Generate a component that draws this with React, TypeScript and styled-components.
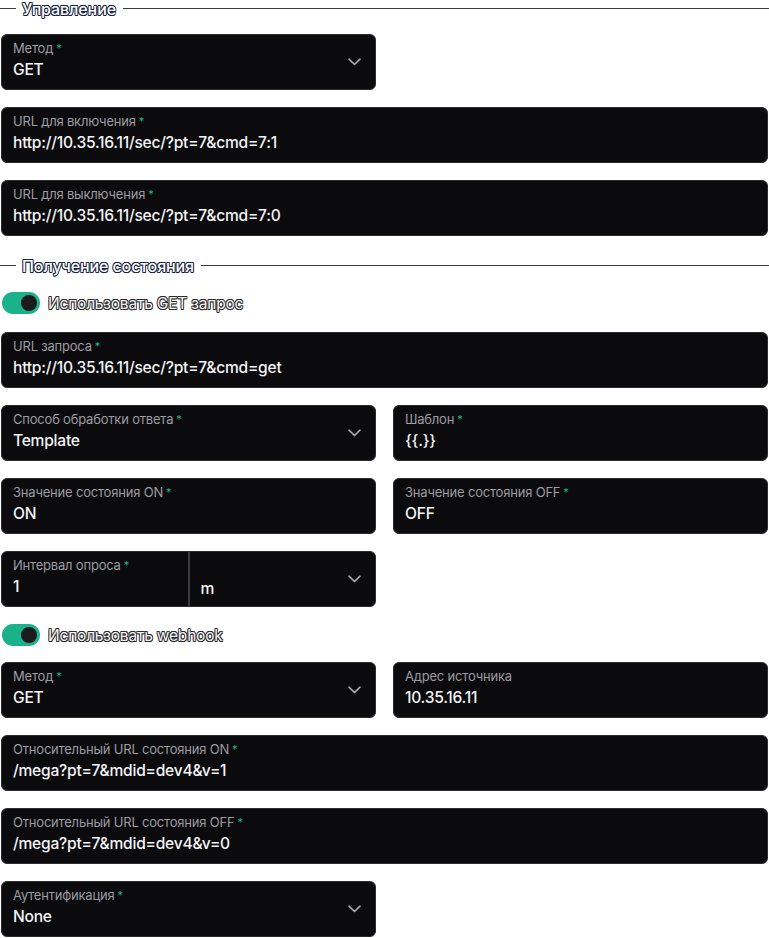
import React from "react";
import styled, { createGlobalStyle } from "styled-components";

const Global = createGlobalStyle`
  html, body { margin: 0; padding: 0; background: #ffffff; }
  body { font-family: Inter, "Noto Sans", sans-serif; }
  * { box-sizing: border-box; }
`;

const Page = styled.div`
  width: 769px;
  padding: 0 1px 1px 1px;
  display: flex;
  flex-direction: column;
  gap: 17px;
`;

const Section = styled.div<{ $top?: number }>`
  display: flex;
  flex-direction: column;
  gap: 17px;
  margin-top: ${(p) => p.$top ?? 0}px;
`;

const outline = (c: string) => `
  text-shadow:
    -0.7px -0.7px 0 ${c}, 0.7px -0.7px 0 ${c}, -0.7px 0.7px 0 ${c}, 0.7px 0.7px 0 ${c},
    0 -0.8px 0 ${c}, 0 0.8px 0 ${c}, -0.8px 0 0 ${c}, 0.8px 0 0 ${c};
`;

const Legend = styled.div`
  display: flex;
  align-items: center;
  height: 17px;
  margin: 0 -1px;
  font-size: 16px;
  font-weight: 500;
  color: #ffffff;
  letter-spacing: -0.1px;
  ${outline("#17223d")}
  &::before {
    content: "";
    width: 16px;
    height: 1px;
    background: #3a3a3e;
    margin-right: 6px;
  }
  &::after {
    content: "";
    flex: 1;
    height: 1px;
    background: #3a3a3e;
    margin-left: 7px;
  }
`;

const Row = styled.div`
  display: grid;
  grid-template-columns: 1fr 1fr;
  gap: 17px;
`;

const Box = styled.div<{ $half?: boolean }>`
  position: relative;
  height: 56px;
  width: ${(p) => (p.$half ? "375px" : "100%")};
  background: #0b0b0d;
  border: 1px solid #2c2c30;
  border-radius: 6px;
  padding: 5px 11px 0 11px;
  display: flex;
  flex-direction: column;
`;

const Label = styled.div`
  font-size: 13px;
  line-height: 17px;
  color: #9c9ca2;
  letter-spacing: -0.2px;
  white-space: nowrap;
`;

const Star = styled.span`
  color: #1fb58c;
  margin-left: 3px;
  font-size: 11px;
  vertical-align: top;
`;

const Value = styled.div`
  margin-top: 3px;
  font-size: 15.6px;
  line-height: 20px;
  color: #f4f4f6;
  font-weight: 500;
  letter-spacing: -0.25px;
  white-space: nowrap;
`;

const Chevron = styled.svg`
  position: absolute;
  right: 14px;
  top: 50%;
  margin-top: -4px;
  width: 13px;
  height: 8px;
`;

const Compound = styled.div`
  display: flex;
  width: 375px;
  height: 56px;
  background: #0b0b0d;
  border: 1px solid #2c2c30;
  border-radius: 6px;
`;

const CompoundPart = styled.div<{ $sep?: boolean }>`
  position: relative;
  flex: 1;
  padding: 5px 11px 0 11px;
  display: flex;
  flex-direction: column;
  justify-content: ${(p) => (p.$sep ? "flex-end" : "flex-start")};
  padding-bottom: ${(p) => (p.$sep ? "7px" : "0")};
  border-left: ${(p) => (p.$sep ? "2px solid #3a3a3e" : "none")};
`;

const ToggleRow = styled.div<{ $mt?: number; $mb?: number }>`
  display: flex;
  align-items: center;
  gap: 8px;
  height: 22px;
  margin: ${(p) => p.$mt ?? 0}px 0 ${(p) => p.$mb ?? 0}px 1px;
`;

const Switch = styled.div`
  width: 38px;
  height: 22px;
  border-radius: 11px;
  background: #1bb18a;
  display: flex;
  align-items: center;
  justify-content: flex-end;
  padding-right: 3px;
  &::after {
    content: "";
    width: 16px;
    height: 16px;
    border-radius: 50%;
    background: #1b1b1e;
  }
`;

const ToggleLabel = styled.span`
  font-size: 15.5px;
  color: #f4f4f4;
  letter-spacing: -0.2px;
  ${outline("#2a2a2c")}
`;

const ChevronIcon = () => (
  <Chevron viewBox="0 0 13 8">
    <path d="M1 1.2 L6.5 6.5 L12 1.2" fill="none" stroke="#a9a9ae" strokeWidth="1.6" strokeLinecap="round" strokeLinejoin="round" />
  </Chevron>
);

type FieldProps = { label: string; value: string; req?: boolean; select?: boolean; half?: boolean };

const Field = ({ label, value, req = true, select, half }: FieldProps) => (
  <Box $half={half}>
    <Label>
      {label}
      {req && <Star>*</Star>}
    </Label>
    <Value>{value}</Value>
    {select && <ChevronIcon />}
  </Box>
);

const Toggle = ({ label, mt, mb }: { label: string; mt?: number; mb?: number }) => (
  <ToggleRow $mt={mt} $mb={mb}>
    <Switch />
    <ToggleLabel>{label}</ToggleLabel>
  </ToggleRow>
);

export default function App() {
  return (
    <>
      <Global />
      <Page>
        <Section>
          <Legend>Управление</Legend>
          <Field label="Метод" value="GET" select half />
          <Field label="URL для включения" value="http://10.35.16.11/sec/?pt=7&cmd=7:1" />
          <Field label="URL для выключения" value="http://10.35.16.11/sec/?pt=7&cmd=7:0" />
        </Section>
        <Section $top={4}>
          <Legend>Получение состояния</Legend>
          <Toggle label="Использовать GET запрос" mt={1} mb={1} />
          <Field label="URL запроса" value="http://10.35.16.11/sec/?pt=7&cmd=get" />
          <Row>
            <Field label="Способ обработки ответа" value="Template" select />
            <Field label="Шаблон" value="{{.}}" />
          </Row>
          <Row>
            <Field label="Значение состояния ON" value="ON" />
            <Field label="Значение состояния OFF" value="OFF" />
          </Row>
          <Compound>
            <CompoundPart>
              <Label>
                Интервал опроса<Star>*</Star>
              </Label>
              <Value>1</Value>
            </CompoundPart>
            <CompoundPart $sep>
              <Value>m</Value>
              <ChevronIcon />
            </CompoundPart>
          </Compound>
          <Toggle label="Использовать webhook" mb={-1} />
          <Row>
            <Field label="Метод" value="GET" select />
            <Field label="Адрес источника" value="10.35.16.11" req={false} />
          </Row>
          <Field label="Относительный URL состояния ON" value="/mega?pt=7&mdid=dev4&v=1" />
          <Field label="Относительный URL состояния OFF" value="/mega?pt=7&mdid=dev4&v=0" />
          <Field label="Аутентификация" value="None" select half />
        </Section>
      </Page>
    </>
  );
}
